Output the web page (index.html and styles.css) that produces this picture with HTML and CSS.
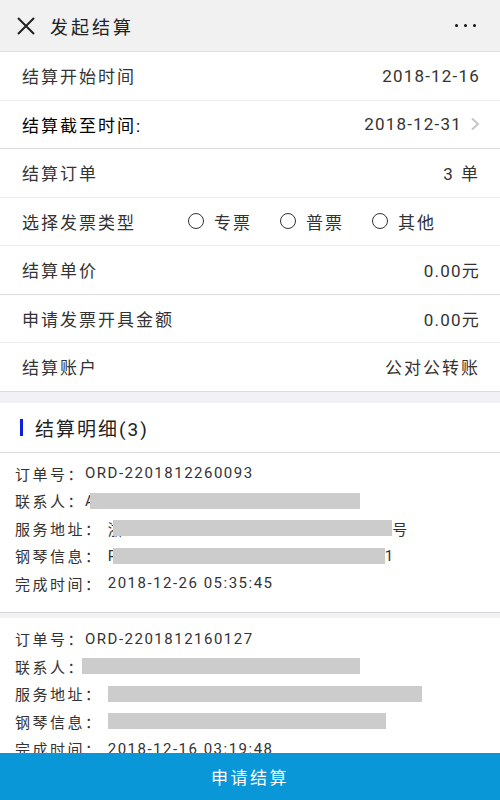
FILE: index.html
```html
<!DOCTYPE html>
<html>

<head>
  <meta charset="utf-8">
  <title>发起结算</title>
  <link rel="stylesheet" href="styles.css">
</head>

<body>

  <header class="topbar">
    <svg class="close" width="20" height="20" viewBox="0 0 20 20">
      <path d="M2 2 L18 18 M18 2 L2 18" stroke="#222" stroke-width="2" fill="none" />
    </svg>
    <h1 class="title">发起结算</h1>
    <div class="more"><i></i><i></i><i></i></div>
  </header>

  <section class="form">
    <div class="row light">
      <span class="label">结算开始时间</span>
      <span class="value">2018-12-16</span>
    </div>
    <div class="row">
      <span class="label strong">结算截至时间:</span>
      <span class="value">2018-12-31</span>
      <svg class="arrow" width="10" height="14" viewBox="0 0 10 14">
        <path d="M2 1.5 L8 7 L2 12.5" stroke="#c6c6c6" stroke-width="2" fill="none" />
      </svg>
    </div>
    <div class="row light">
      <span class="label">结算订单</span>
      <span class="value cn">3 单</span>
    </div>
    <div class="row light">
      <span class="label">选择发票类型</span>
      <div class="radios">
        <label class="radio"><span class="dot"></span>专票</label>
        <label class="radio"><span class="dot"></span>普票</label>
        <label class="radio"><span class="dot"></span>其他</label>
      </div>
    </div>
    <div class="row">
      <span class="label">结算单价</span>
      <span class="value">0.00元</span>
    </div>
    <div class="row light">
      <span class="label">申请发票开具金额</span>
      <span class="value">0.00元</span>
    </div>
    <div class="row">
      <span class="label">结算账户</span>
      <span class="value cn">公对公转账</span>
    </div>
  </section>

  <section class="detail">
    <h2 class="detail-title">结算明细(3)</h2>

    <div class="order">
      <p><span class="k">订单号：</span>ORD-2201812260093</p>
      <p><span class="k">联系人：</span>A<span class="mask" style="width: 270px; margin-left: -6px"></span></p>
      <p><span class="k">服务地址：</span>&nbsp;浙<span class="mask" style="width: 279px; margin-left: -11px"></span>号</p>
      <p><span class="k">钢琴信息：</span>&nbsp;P<span class="mask" style="width: 272px; margin-left: -6px"></span>1</p>
      <p><span class="k">完成时间：</span>&nbsp;2018-12-26 05:35:45</p>
    </div>

    <div class="order">
      <p><span class="k">订单号：</span>ORD-2201812160127</p>
      <p><span class="k">联系人：</span><span class="mask" style="width: 278px; margin-left: -3px"></span></p>
      <p><span class="k">服务地址：</span><span class="mask" style="width: 314px; margin-left: 5px"></span></p>
      <p><span class="k">钢琴信息：</span><span class="mask" style="width: 278px; margin-left: 5px"></span></p>
      <p><span class="k">完成时间：</span>&nbsp;2018-12-16 03:19:48</p>
    </div>
  </section>

  <button class="submit">申请结算</button>

</body>

</html>
```

FILE: styles.css
```css
body {
  font-family: Roboto, "Noto Sans CJK SC", sans-serif;
  margin: 0;
  padding: 0 0 60px;
  background: #f2f2f6;
  color: #333;
}

.topbar {
  height: 51px;
  display: flex;
  align-items: center;
  padding: 0 16px;
  background: #f1f1f1;
  border-bottom: 1px solid #e2e2e2;
}

.close {
  flex: none;
}

.title {
  flex: 1;
  margin: 0 0 0 14px;
  font-size: 18px;
  font-weight: normal;
  letter-spacing: 3px;
  color: #222;
}

.more {
  display: flex;
  gap: 6px;
  margin-right: 8px;
}

.more i {
  width: 3px;
  height: 3px;
  border-radius: 50%;
  background: #111;
}

.form {
  background: #fff;
}

.row {
  height: 47.5px;
  display: flex;
  align-items: center;
  padding: 0 20px 0 22px;
  border-bottom: 1px solid #dcdcdc;
  font-size: 17px;
  letter-spacing: 2px;
  position: relative;
}

.row.light {
  border-bottom-color: #ececec;
}

.label {
  flex: 1;
}

.label.strong {
  color: #000;
}

.value {
  color: #333;
  letter-spacing: 1.2px;
}

.value.cn {
  letter-spacing: 2px;
}

.arrow {
  margin-left: 8px;
}

.radios {
  display: flex;
  position: absolute;
  left: 188px;
  gap: 28px;
}

.radio {
  display: flex;
  align-items: center;
  gap: 10px;
}

.dot {
  width: 14px;
  height: 14px;
  border: 1.5px solid #333;
  border-radius: 50%;
}

.detail {
  margin-top: 11px;
  background: #f2f2f6;
}

.detail-title {
  margin: 0;
  height: 49px;
  display: flex;
  align-items: center;
  padding-left: 20px;
  background: #fff;
  border-bottom: 1px solid #dcdcdc;
  font-size: 19px;
  font-weight: normal;
  letter-spacing: 2px;
  color: #222;
}

.detail-title::before {
  content: '';
  width: 3px;
  height: 17px;
  background: #1020d8;
  margin-right: 12px;
}

.order {
  background: #fff;
  padding: 7px 15px 15px;
  border-bottom: 1px solid #d6d6d6;
  margin-bottom: 5px;
}

.order p {
  margin: 0;
  height: 27.5px;
  display: flex;
  align-items: center;
  font-size: 15px;
  letter-spacing: 1.5px;
  color: #333;
  white-space: nowrap;
}

.order .k {
  letter-spacing: 2.5px;
}

.mask {
  display: inline-block;
  height: 16px;
  background: #cccccc;
}

.submit {
  position: fixed;
  left: 0;
  bottom: 0;
  width: 100%;
  height: 47px;
  border: none;
  background: #0997d8;
  color: #fff;
  font-family: Roboto, "Noto Sans CJK SC", sans-serif;
  font-size: 17px;
  letter-spacing: 2.5px;
}
```
